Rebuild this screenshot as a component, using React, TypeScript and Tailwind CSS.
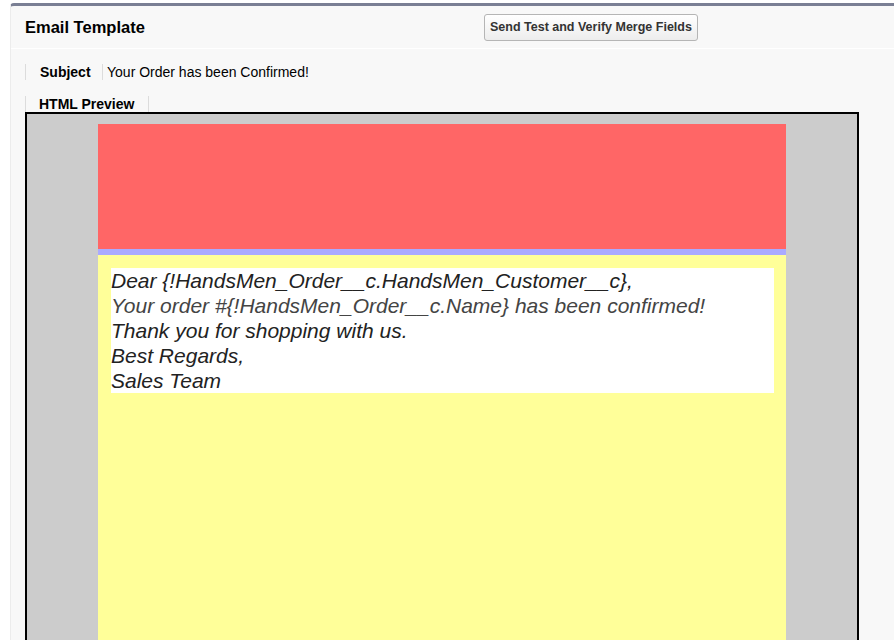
import React from "react";

const lines = [
  { text: "Dear {!HandsMen_Order__c.HandsMen_Customer__c},", tone: "text-[#222]" },
  { text: "Your order #{!HandsMen_Order__c.Name} has been confirmed!", tone: "text-[#444]" },
  { text: "Thank you for shopping with us.", tone: "text-[#222]" },
  { text: "Best Regards,", tone: "text-[#222]" },
  { text: "Sales Team", tone: "text-[#222]" },
];

export default function App() {
  return (
    <div className="h-[640px] w-full overflow-hidden bg-white pl-[10px] pt-[3px] font-['Liberation_Sans',Arial,sans-serif]">
      <div className="w-[900px] rounded-tl-[4px] border-l border-t-[3px] border-l-[#ececec] border-t-[#7a7f94] bg-[#f8f8f8]">
        {/* header */}
        <div className="flex h-[43px] items-center border-b border-white pl-[14px]">
          <h2 className="w-[459px] text-[16.5px] font-bold text-black">Email Template</h2>
          <button className="h-[27px] rounded-[3px] border border-[#b5b5b5] bg-gradient-to-b from-white to-[#ededed] px-[5px] text-[12.5px] font-bold text-[#333]">
            Send Test and Verify Merge Fields
          </button>
        </div>

        {/* subject */}
        <div className="mt-[15px] flex h-[16px] items-center pl-[14px] text-[14px] leading-[16px]">
          <div className="flex h-full w-[77px] items-center border-l border-[#dcdcdc] pl-[14px] font-bold text-black">
            Subject
          </div>
          <div className="flex h-full items-center border-l border-[#dcdcdc] pl-[4px] text-black">
            Your Order has been Confirmed!
          </div>
        </div>

        {/* tab */}
        <div className="mt-[16px] pl-[14px]">
          <div className="flex h-[16px] w-[124px] items-center border-x border-[#dcdcdc] pl-[13px] text-[14px] font-bold leading-[16px] text-black">
            HTML Preview
          </div>
        </div>

        {/* preview */}
        <div className="ml-[14px] w-[834px] border-2 border-black bg-[#cccccc] pt-[10px]">
          <div className="mx-auto w-[688px]">
            <div className="h-[125px] bg-[#ff6666]" />
            <div className="h-[6px] bg-[#aaaaff]" />
            <div className="h-[500px] bg-[#ffff99] pl-[13px] pr-[12px] pt-[13px]">
              <div className="bg-white">
                {lines.map((l) => (
                  <div key={l.text} className={`text-[21px] italic leading-[25px] ${l.tone}`}>
                    {l.text}
                  </div>
                ))}
              </div>
            </div>
          </div>
        </div>
      </div>
    </div>
  );
}
